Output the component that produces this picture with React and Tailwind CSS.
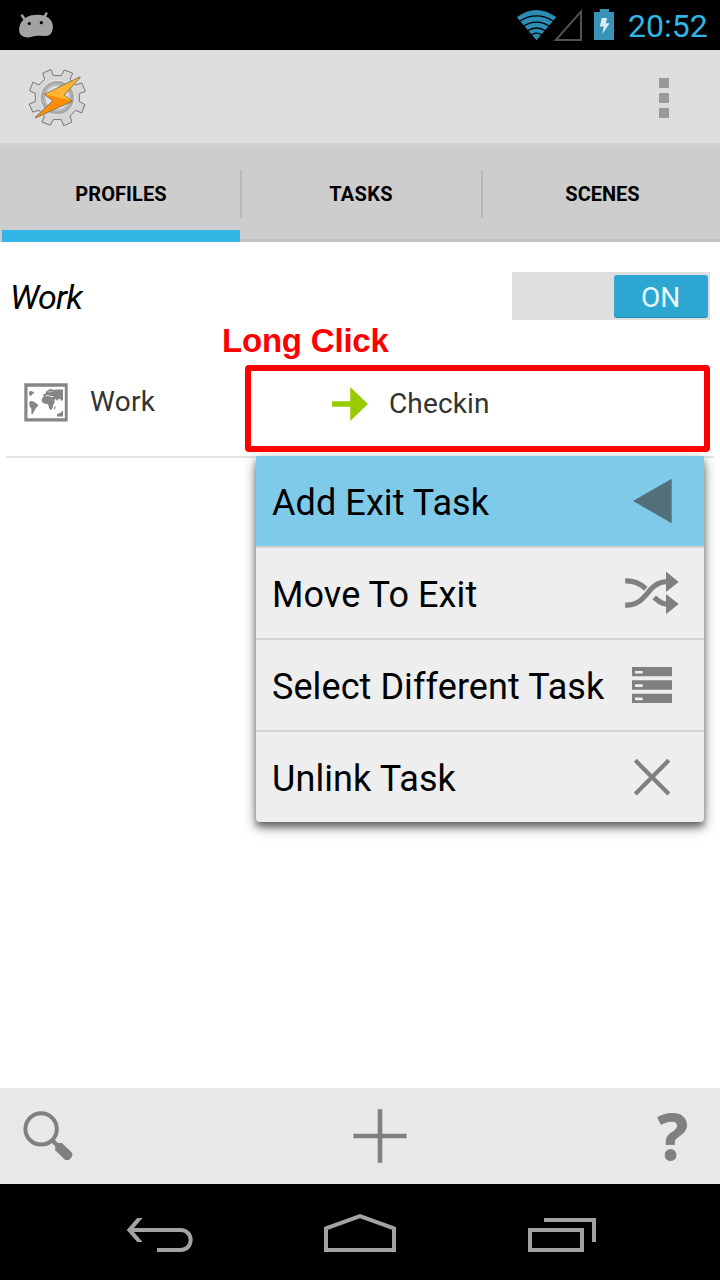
import React from "react";

const VALLEY_HALF = 4;
const gearPoints = Array.from({ length: 8 }, (_, k) => {
  const a = (k * Math.PI) / 4;
  return [
    [-VALLEY_HALF, -22],
    [VALLEY_HALF, -22],
    [7, -27.6],
    [15.4, -24.4],
  ]
    .map(([x, y]) => [x * Math.cos(a) - y * Math.sin(a), x * Math.sin(a) + y * Math.cos(a)])
    .map(([x, y]) => `${(x + 30.3).toFixed(2)},${(y + 30.6).toFixed(2)}`)
    .join(" ");
}).join(" ");

function DroidIcon() {
  return (
    <svg width="36" height="28" viewBox="18 11 36 28" fill="#a3a3a3">
      <path d="M25.5 20.5 22 15.5M43.5 19 46.3 13.5" stroke="#a3a3a3" strokeWidth="2.6" strokeLinecap="round" />
      <path d="M27 17C31 14.6 39 14.3 43.5 15.6C49.5 17 53 22 52.9 27C52.8 32 50.5 35.8 46 36C41 36.2 36 35.2 32.5 36.6C28 38.3 22.5 37.7 20 33.8C17.5 28.5 20.5 20.5 27 17Z" />
      <circle cx="29.3" cy="23.5" r="1.6" fill="#000" />
      <circle cx="41.3" cy="22.7" r="1.6" fill="#000" />
      <path d="M33 28.5h1M33 31h1M38 31h1" stroke="#8b8b8b" strokeWidth=".8" />
    </svg>
  );
}

function WifiIcon() {
  return (
    <svg width="40" height="32" viewBox="516 9 40 32">
      <path d="M536.5 40.2 516.8 17.2Q536.5 2.6 556.2 17.2Z" fill="#2b8db5" />
      <g fill="none" stroke="#000" strokeWidth="1.3">
        <path d="M519.5 21.2Q536.5 10.6 553.5 21.2" />
        <path d="M523.5 26.2Q536.5 18.1 549.5 26.2" />
        <path d="M527.5 30.8Q536.5 25.2 545.5 30.8" />
        <path d="M531 35Q536.5 31.2 542 35" />
      </g>
    </svg>
  );
}

function SignalIcon() {
  return (
    <svg width="30" height="34" viewBox="553 8 30 34">
      <path d="M555.8 40H581V11.6Z" fill="none" stroke="#525252" strokeWidth="2" />
    </svg>
  );
}

function BatteryIcon() {
  return (
    <svg width="20" height="32" viewBox="594 9 20 32">
      <path d="M594 12h5.7V9h9.3v3h5v28h-20Z" fill="#3993b8" />
      <path d="M601.8 18 607.2 18 605.8 23.2 609.7 23.2 602.3 34.2 603.8 26.4 599.8 26.4Z" fill="#d9edf5" />
    </svg>
  );
}

function GearBoltIcon() {
  return (
    <svg width="60" height="60" viewBox="0 0 60 60">
      <polygon points={gearPoints} fill="#d6d6d6" stroke="#777" strokeWidth="1" strokeLinejoin="round" />
      <circle cx="30.3" cy="30.6" r="17" fill="none" stroke="#e8e8e8" strokeWidth="1.2" />
      <circle cx="30.3" cy="30.6" r="15" fill="#ddd" stroke="#a9a9a9" strokeWidth="3.4" />
      <circle cx="30.3" cy="30.6" r="12.5" fill="#e2e2e2" stroke="#999" strokeWidth=".8" />
      <polygon points="52.9,10.2 17.9,27.4 26.4,33.8 8.6,50.6 44.9,34 36.8,28.1" fill="#ff8c05" stroke="#7d735f" strokeWidth="1.4" strokeLinejoin="round" />
      <polygon points="52.9,10.2 17.9,27.4 44.9,34 36.8,28.1" fill="#ffb530" />
      <polygon points="17.9,27.4 26.4,33.8 8.6,50.6 44.9,34" fill="#ff8d08" />
    </svg>
  );
}

function MapIcon() {
  return (
    <svg width="44" height="39" viewBox="24 382.5 44 39">
      <path d="M24.3 382.8h43.4v38.2h-43.4Z" fill="#868686" />
      <path d="M27.5 386.2h37.3v31.5H27.5Z" fill="#fff" />
      <g fill="#868686">
        <path d="M29 391.2l1.8-.8 1.6.6 2.2 1.5-2.2 1.1-1.3 1.8-1.8-.6Z" />
        <path d="M29.2 401.4l1.8-.9 2.7.5 2.1 1.6 2.5 1.6-.9 2.1-1.8 1.8-1.6 2.8-1.5 2.8-1.2-.4.1-4.8-1.9-3Z" />
        <path d="M41.8 398.4l1.7-2.6-.2-1.7 2.3-1 .6-2.2 2.6-1.9 3.4-.4 1.4.9 3.2-.5H63v10l-2.2 1.7-.4-2.2-1.8-.3-1 2.2-1.8-2-1.4.8.4 2.6-1.7 2.6-.3 3.2-1.9 1.9-1.2-.6-1.7-5.1-4.7-1.1-1.6-1.6Z" />
        <path d="M54.8 405.2l.9 1.2-.9 2.6-.9-.8Z" />
        <path d="M57 413.6l3-1 3-2.6v5.9h-6Z" />
      </g>
      <path d="M45.5 395.7l2.6-.9 1.7 1.1 3.6.2" fill="none" stroke="#fff" strokeWidth=".8" />
      <path d="M47.5 390.9l2.2.6 3.3-1.2" fill="none" stroke="#ddd" strokeWidth=".7" />
    </svg>
  );
}

function ArrowIcon() {
  return (
    <svg width="38" height="36" viewBox="331 386 38 36">
      <path d="M332 401.2h18.2V387L368 404l-17.8 17v-14.2H332Z" fill="#99cc00" />
    </svg>
  );
}

function TriangleIcon() {
  return (
    <svg width="60" height="60" viewBox="622 471 60 60">
      <path d="M633 501 671.7 478.8V523.2Z" fill="#526f7b" />
    </svg>
  );
}

function ShuffleIcon() {
  return (
    <svg width="60" height="60" viewBox="622 563 60 60">
      <g fill="none" stroke="#808080" strokeWidth="5.2">
        <path d="M625.2 581C634 580.4 640 583.6 645.8 588.7" />
        <path d="M625.2 605.1C648 606 646 582.4 667 581.5" />
        <path d="M654.2 597.3C658 600.8 661 603.7 667 604.2" />
      </g>
      <path d="M666 571.5 678.7 582 666 592ZM666 594 678.7 604 666 614.3Z" fill="#808080" />
    </svg>
  );
}

function ListIcon() {
  return (
    <svg width="60" height="60" viewBox="622 655 60 60">
      <path d="M632 667h40v9.3h-40ZM632 680.3h40v9.5h-40ZM632 693.8h40v9.2h-40Z" fill="#808080" />
      <path d="M635 671h7.8v2.6H635ZM635 684.3h7.8v2.6H635ZM635 697.6h7.8v2.6H635Z" fill="#eee" />
    </svg>
  );
}

function CrossIcon() {
  return (
    <svg width="60" height="60" viewBox="622 747 60 60">
      <path d="M635.3 760.3 668.8 794M668.8 760.3 635.3 794" stroke="#808080" strokeWidth="4.2" />
    </svg>
  );
}

function SearchIcon() {
  return (
    <svg width="50" height="50" viewBox="23 1111 50 50">
      <circle cx="41.1" cy="1128.9" r="15.7" fill="none" stroke="#808080" strokeWidth="4" />
      <path d="M52 1140 58 1146" stroke="#808080" strokeWidth="4.4" />
      <path d="M55.3 1144.5 57.5 1143H62L71.5 1152.3Q73.5 1155 71.3 1157.5L69.5 1159.5Q66.8 1161.3 64.3 1159.2L55.3 1150.2Z" fill="#808080" />
    </svg>
  );
}

function PlusIcon() {
  return (
    <svg width="54" height="54" viewBox="353 1109 54 54">
      <path d="M353.5 1136h53M380 1109.3v53.4" stroke="#808080" strokeWidth="4.6" />
    </svg>
  );
}

function BackIcon() {
  return (
    <svg width="68" height="36" viewBox="126 1217 68 36" fill="none" stroke="#a3a3a3" strokeWidth="4">
      <path d="M130 1230H180.5C194 1230 194 1250 180.5 1250H157" />
      <path d="M126.7 1230 137.2 1218H142.6L132.2 1230 142.6 1242H137.2Z" fill="#a3a3a3" stroke="none" />
    </svg>
  );
}

function HomeIcon() {
  return (
    <svg width="72" height="40" viewBox="324 1213 72 40">
      <path d="M326 1228.3 360 1216.2 394 1228.3V1250H326Z" fill="none" stroke="#a3a3a3" strokeWidth="4" />
    </svg>
  );
}

function RecentsIcon() {
  return (
    <svg width="68" height="34" viewBox="528 1218 68 34" fill="none" stroke="#a3a3a3" strokeWidth="4">
      <path d="M530 1230h52v20h-52Z" />
      <path d="M544 1220h50v22" />
    </svg>
  );
}

const menuItems = [
  { label: "Add Exit Task", Icon: TriangleIcon, row: "bg-[#7fcae9]" },
  { label: "Move To Exit", Icon: ShuffleIcon, row: "border-t-2 border-[#d3d3d3]" },
  { label: "Select Different Task", Icon: ListIcon, row: "border-t-2 border-[#d3d3d3]" },
  { label: "Unlink Task", Icon: CrossIcon, row: "border-t-2 border-[#d3d3d3]" },
];

function StatusBar() {
  return (
    <header className="flex h-[50px] items-start bg-black pl-[18px] pr-3">
      <div className="mt-[11px]"><DroidIcon /></div>
      <div className="ml-auto flex items-start">
        <div className="mt-[9px]"><WifiIcon /></div>
        <div className="-ml-[3px] mt-2"><SignalIcon /></div>
        <div className="ml-[11px] mt-[9px]"><BatteryIcon /></div>
        <span className="ml-[14px] mt-[6px] w-[80px] whitespace-nowrap text-[32px] leading-10 text-[#33b5e5]">20:52</span>
      </div>
    </header>
  );
}

function ContextMenu() {
  return (
    <ul className="absolute left-[256px] top-[456px] w-[448px] rounded-b bg-[#eee] shadow-[0_5px_14px_rgba(0,0,0,0.4),0_5px_6px_rgba(0,0,0,0.4)]">
      {menuItems.map(({ label, Icon, row }, i) => (
        <li key={label} className={`flex items-center justify-between pl-[16px] pr-[22px] ${i === 0 ? "h-[90px]" : "h-[92px]"} ${row}`}>
          <span className="whitespace-nowrap pt-[3px] text-[36px] leading-[42px] tracking-[0.08px] text-black">{label}</span>
          <Icon />
        </li>
      ))}
    </ul>
  );
}

export default function App() {
  return (
    <div className="relative flex h-[1280px] w-[720px] flex-col overflow-hidden bg-white font-[Roboto,sans-serif]">
      <StatusBar />

      <div className="flex h-[97px] items-start justify-between border-b-4 border-[#d2d2d2] bg-[#ddd] pl-[27px] pr-[51px]">
        <div className="mt-[17px]"><GearBoltIcon /></div>
        <div className="mt-7 flex flex-col gap-[5px]">
          <i className="size-[10px] bg-[#999]" />
          <i className="size-[10px] bg-[#999]" />
          <i className="size-[10px] bg-[#999]" />
        </div>
      </div>

      <nav className="flex h-[95px] bg-[#cdcdcd] text-[20px] font-bold leading-6 text-black">
        <div className="flex w-[240px] flex-col items-center justify-between pl-[2px] pt-[35px]">
          <span className="tracking-[0.1px]">PROFILES</span>
          <div className="h-3 w-full bg-[#33b5e5]" />
        </div>
        <div className="flex w-[241px] justify-center border-b-[3px] border-[#c3c3c3]">
          <div className="mt-[23px] h-12 w-[2px] bg-[#b7b7b7]" />
          <span className="flex-1 pr-px pt-[35px] text-center tracking-[0.3px]">TASKS</span>
        </div>
        <div className="flex flex-1 justify-center border-b-[3px] border-[#c3c3c3]">
          <div className="mt-[23px] h-12 w-[2px] bg-[#b7b7b7]" />
          <span className="flex-1 pl-[2px] pt-[35px] text-center">SCENES</span>
        </div>
      </nav>

      <main className="flex flex-1 flex-col">
        <div className="flex h-[104px] items-start justify-between pl-[10px] pr-[10px] pt-[30px]">
          <span className="mt-[5px] text-[34px] italic leading-10 tracking-[-0.8px] text-black">Work</span>
          <div className="flex h-12 w-[198px] justify-end bg-[#dfdfdf] pr-[2px] pt-[3px]">
            <div className="flex h-[43px] w-[94px] items-center justify-center rounded-[3px] border-b border-[#278db0] bg-[#2ea6d2] pr-px pt-[4px] text-[28px] text-white/90">ON</div>
          </div>
        </div>
        <div className="mx-[6px] flex h-[112px] items-start border-b-2 border-[#e3e3e3] pl-[18px] text-[28px] leading-8 text-[#333]">
          <div className="mt-[37px]"><MapIcon /></div>
          <span className="ml-[22px] mt-[40px] w-[241px] tracking-[0.3px]">Work</span>
          <div className="mt-10"><ArrowIcon /></div>
          <span className="ml-5 mt-[42px] tracking-[0.15px]">Checkin</span>
        </div>
      </main>

      <footer className="flex h-24 items-center justify-between bg-[#e8e8e8] pl-[23px] pr-[32px]">
        <SearchIcon />
        <div className="ml-[30px]"><PlusIcon /></div>
        <span className="-mt-px font-['Open_Sans',sans-serif] text-[64px] font-bold leading-[96px] text-[#808080] [-webkit-text-stroke:0.8px_#808080]">?</span>
      </footer>

      <div className="flex h-24 items-start bg-black pl-[126px]">
        <div className="mt-[33px]"><BackIcon /></div>
        <div className="ml-[130px] mt-[29px]"><HomeIcon /></div>
        <div className="ml-[132px] mt-[34px]"><RecentsIcon /></div>
      </div>

      <ContextMenu />
      <div className="absolute left-[245px] top-[365px] h-[87px] w-[465px] rounded-[4px] border-[6px] border-[#f00]" />
      <span className="absolute left-[222px] top-[321px] whitespace-nowrap font-['Liberation_Sans',sans-serif] text-[33px] font-bold leading-10 tracking-[-0.2px] text-[#f00]">Long Click</span>
    </div>
  );
}
